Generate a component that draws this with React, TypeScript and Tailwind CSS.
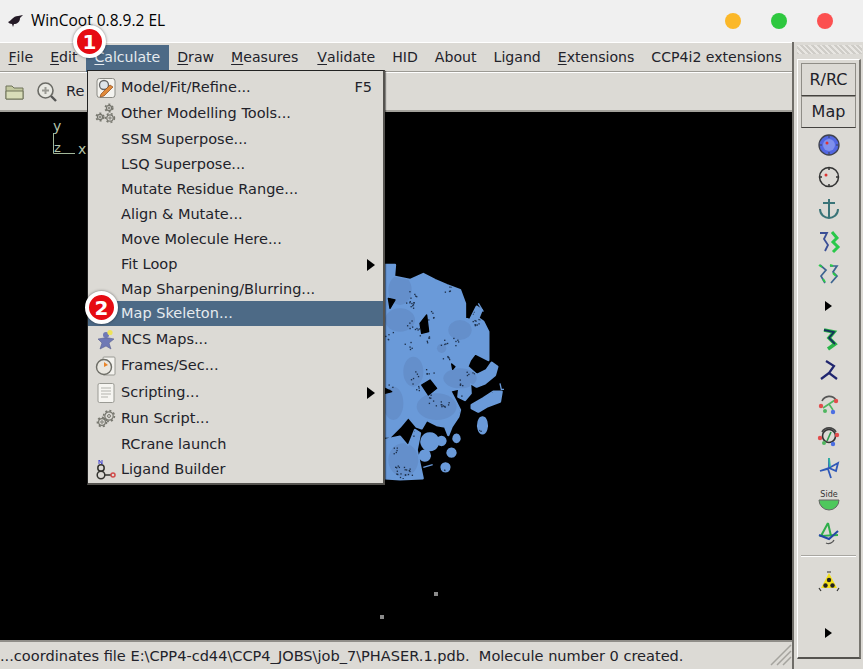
import React from "react";

const menus = [
  ["F", "ile"],
  ["E", "dit"],
  ["C", "alculate"],
  ["D", "raw"],
  ["M", "easures"],
  ["V", "alidate"],
  ["", "HID"],
  ["", "About"],
  ["", "Ligand"],
  ["E", "xtensions"],
  ["", "CCP4i2 extensions"],
];

const Gear = ({ x, y, r }: { x: number; y: number; r: number }) => (
  <g fill="none" stroke="#77776f">
    <circle cx={x} cy={y} r={r} strokeWidth="1.2" />
    <circle cx={x} cy={y} r={r + 1.2} strokeWidth="1.6" strokeDasharray="2 2.2" />
    <circle cx={x} cy={y} r={r * 0.35} strokeWidth="1" />
  </g>
);

const items: { label: string; icon?: React.ReactNode; right?: string; arrow?: boolean; active?: boolean; nudge?: boolean; h: number }[] = [
  {
    label: "Model/Fit/Refine...",
    right: "F5",
    h: 27,
    icon: (
      <svg width="20" height="22" viewBox="0 0 20 22">
        <rect x="1" y="1.5" width="18" height="19" rx="2.5" fill="#f4f3ef" stroke="#8a8a84" />
        <circle cx="8" cy="8" r="4.5" fill="#dfe5ea" stroke="#666" strokeWidth="1.3" />
        <path d="M5 17l9-9 3 2-9 9-4 1z" fill="#e08a3a" stroke="#8d4a1c" strokeWidth=".7" />
      </svg>
    ),
  },
  {
    label: "Other Modelling Tools...",
    h: 26,
    icon: (
      <svg width="24" height="24" viewBox="0 0 24 24">
        <Gear x={15} y={6} r={2.6} />
        <Gear x={6} y={15} r={2.6} />
        <Gear x={16} y={16} r={3.2} />
      </svg>
    ),
  },
  { label: "SSM Superpose...", h: 25 },
  { label: "LSQ Superpose...", h: 25 },
  { label: "Mutate Residue Range...", h: 25 },
  { label: "Align & Mutate...", h: 25 },
  { label: "Move Molecule Here...", h: 25 },
  { label: "Fit Loop", arrow: true, h: 25 },
  { label: "Map Sharpening/Blurring...", nudge: true, h: 24 },
  { label: "Map Skeleton...", active: true, h: 25 },
  {
    label: "NCS Maps...",
    nudge: true,
    h: 26,
    icon: (
      <svg width="20" height="22" viewBox="0 0 20 22">
        <circle cx="10" cy="6" r="3" fill="#6f79b5" />
        <path d="M2 10l6-1h5l5 1-5 4 2 6-5-3-6 3 2-6z" fill="#6f79b5" stroke="#59608f" strokeWidth=".6" />
        <circle cx="14" cy="3.5" r="2.6" fill="#eee35a" />
      </svg>
    ),
  },
  {
    label: "Frames/Sec...",
    h: 27,
    icon: (
      <svg width="22" height="22" viewBox="0 0 22 22">
        <rect x="8" y="2" width="12" height="18" rx="1" fill="#f3f2ee" stroke="#9a9a94" />
        <circle cx="9" cy="12" r="7.5" fill="#e9e7e0" stroke="#6d6d66" strokeWidth="1.4" />
        <path d="M9 12V7l4 3z" fill="#e8852a" />
      </svg>
    ),
  },
  {
    label: "Scripting...",
    arrow: true,
    nudge: true,
    h: 26,
    icon: (
      <svg width="20" height="22" viewBox="0 0 20 22" fill="none">
        <rect x="2" y="1.5" width="16" height="19" rx="1.5" fill="#f6f5f1" stroke="#9a9a94" />
        <path d="M5 6h10M5 9h10M5 12h10M5 15h7" stroke="#b3b3ad" />
      </svg>
    ),
  },
  {
    label: "Run Script...",
    h: 27,
    icon: (
      <svg width="22" height="22" viewBox="0 0 22 22">
        <Gear x={7} y={14} r={3.4} />
        <Gear x={14} y={8} r={4.2} />
      </svg>
    ),
  },
  { label: "RCrane launch", h: 25 },
  {
    label: "Ligand Builder",
    h: 25,
    icon: (
      <svg width="22" height="22" viewBox="0 0 22 22" fill="none" strokeWidth="1.5">
        <circle cx="6" cy="9" r="3.2" stroke="#33332f" />
        <circle cx="6" cy="16" r="3.8" stroke="#33332f" />
        <path d="M10 16h6" stroke="#33332f" />
        <circle cx="18" cy="16" r="2" stroke="#d24a4a" />
        <path d="M4 5V1l3 4V1" stroke="#4040d0" strokeWidth="1" />
      </svg>
    ),
  },
];

const Badge = ({ n, className }: { n: string; className: string }) => (
  <div
    className={`absolute z-30 flex h-[33px] w-[33px] items-center justify-center rounded-full border-[4px] border-white bg-[#e60b12] font-['DejaVu_Sans'] text-[20px] leading-none font-bold text-white shadow-[0_0_3px_rgba(0,0,0,0.5)] ${className}`}
  >
    {n}
  </div>
);

// coordinates below are in 3x pixels, the group scales them down
const blobPath =
  "M15 15 L45 15 L42 50 L90 60 L130 42 L165 60 L200 75 L240 90 L255 130 L255 175 L270 180 L290 140 L305 150 L295 175 L310 185 L325 215 L325 300 L285 280 L270 300 L262 320 L290 345 L320 330 L335 308 L352 320 L345 345 L315 370 L290 380 L270 368 L272 400 L255 420 L235 410 L238 385 L210 392 L225 420 L240 450 L235 470 L215 500 L205 525 L195 500 L170 495 L140 480 L125 505 L110 500 L85 470 L60 500 L30 530 L15 530 Z " +
  "M15 540 L60 530 L85 560 L105 510 L120 520 L110 570 L128 655 L60 658 L15 655 Z " +
  "M275 435 L310 415 L340 395 L365 395 L360 425 L320 440 L295 455 L275 445 Z " +
  "M150 520 A25 25 0 1 1 149 520 Z M185 531 A12 12 0 1 1 184 531 Z M135 572 A15 15 0 1 1 134 572 Z " +
  "M215 566 A12 12 0 1 1 214 566 Z M230 524 A9 11 0 1 1 229 524 Z M197 610 A12 12 0 1 1 196 610 Z " +
  "M308 472 A13 24 0 1 1 307 472 Z";

const rand = (i: number) => {
  const v = Math.sin(i * 12.9898 + 4.1) * 43758.5453;
  return v - Math.floor(v);
};

// little clusters of dark specks, like the holes in the surface
const specks: number[][] = [];
for (let c = 0; c < 46; c++) {
  const cx = 20 + rand(c * 2) * 320;
  const cy = 20 + rand(c * 2 + 1) * 630;
  for (let k = 0; k < 5; k++) {
    specks.push([cx + rand(100 + c * 7 + k) * 26 - 13, cy + rand(500 + c * 5 + k) * 26 - 13]);
  }
}

const Blob = () => (
  <svg className="absolute top-0 left-0" width="792" height="528" viewBox="0 0 792 528">
    <defs>
      <clipPath id="blob">
        <path d={blobPath} />
      </clipPath>
    </defs>
    <g transform="translate(380,148) scale(0.3333)">
      <path d={blobPath} fill="#6a9ad9" stroke="#6a9ad9" strokeWidth="7" strokeLinejoin="round" />
      <g clipPath="url(#blob)" fill="#648fcb">
        <ellipse cx="60" cy="90" rx="35" ry="45" />
        <ellipse cx="60" cy="180" rx="45" ry="35" />
        <ellipse cx="240" cy="210" rx="35" ry="30" />
        <ellipse cx="100" cy="335" rx="30" ry="45" />
        <ellipse cx="240" cy="355" rx="50" ry="30" />
        <ellipse cx="170" cy="440" rx="60" ry="40" />
        <ellipse cx="40" cy="430" rx="30" ry="50" />
        <ellipse cx="70" cy="600" rx="45" ry="50" />
        <circle cx="185" cy="265" r="14" />
        {specks.map(([x, y], i) => (
          <rect key={i} x={x} y={y} width="4" height="4" fill="#1d2f49" />
        ))}
      </g>
      <path
        fill="#000"
        stroke="#000"
        strokeWidth="4"
        strokeLinejoin="round"
        d="M120 190 L140 165 L146 215 L125 220 Z M125 375 L150 360 L170 385 L145 405 Z M25 115 L45 120 L30 145 Z M15 385 L35 395 L15 400 Z M215 312 L225 320 L218 328 Z"
      />
      <path d="M360 370 L364 388 L372 388" stroke="#6a9ad9" strokeWidth="4" fill="none" />
      <path d="M295 130 L310 155" stroke="#6a9ad9" strokeWidth="4" />
      <path d="M130 622 L158 614" stroke="#6a9ad9" strokeWidth="4" />
    </g>
    <rect x="380" y="503" width="4" height="4" fill="#8a8a8a" />
    <rect x="434" y="480" width="4" height="4" fill="#8a8a8a" />
    <path d="M53.5 21v20.5H75" stroke="#a3b89a" fill="none" />
    <text x="53" y="19" fill="#b4c4aa" fontSize="14" fontFamily="DejaVu Sans">y</text>
    <text x="54" y="40" fill="#b4c4aa" fontSize="13" fontFamily="DejaVu Sans">z</text>
    <text x="78" y="42" fill="#b4c4aa" fontSize="14" fontFamily="DejaVu Sans">x</text>
  </svg>
);

const sideIcons: React.ReactNode[] = [
  <svg width="24" height="24" viewBox="0 0 24 24"><circle cx="12" cy="12" r="10" fill="#5267e2" stroke="#3f4250" strokeWidth="1.3" /><circle cx="12" cy="12" r="6" fill="#7f90ec" /><path d="M12 2v3M12 19v3M2 12h3M19 12h3" stroke="#3f4250" /><circle cx="10" cy="10" r="1.5" fill="#d33" /></svg>,
  <svg width="24" height="24" viewBox="0 0 24 24" fill="none" stroke="#333" strokeWidth="1.5"><circle cx="12" cy="12" r="9.5" /><path d="M12 2v3M12 19v3M2 12h3M19 12h3" /><circle cx="9" cy="10" r="1.5" fill="#d33" stroke="none" /></svg>,
  <svg width="24" height="24" viewBox="0 0 24 24" fill="none" stroke="#3a7478" strokeWidth="2"><path d="M12 2v19M6 6h12M3 12c0 6 5 9 9 9s9-3 9-9" /></svg>,
  <svg width="24" height="24" viewBox="0 0 24 24" fill="none" strokeWidth="1.8"><path d="M3 3h7l-3 6 4 6-3 6" stroke="#3b4f96" /><path d="M15 2l5 6-4 4 5 5-5 5" stroke="#2ac84a" strokeWidth="3" /></svg>,
  <svg width="24" height="24" viewBox="0 0 24 24" fill="none" strokeWidth="1.7"><path d="M3 3l6 5-5 6 4 7M13 4h7l-4 6 4 4-6 7" stroke="#3d6490" /><path d="M2 3l3 2M6 17l2 3M16 11l3 3M13 3l3 1" stroke="#2ac84a" strokeWidth="2" /></svg>,
];

const sideIcons2: React.ReactNode[] = [
  <svg width="24" height="24" viewBox="0 0 24 24" fill="none" strokeWidth="3.6"><path d="M7 3l10 2-5 6 6 6-7 5" stroke="#2bb54a" /><path d="M7 3l10 2-5 6 6 6" stroke="#14325a" strokeWidth="1.8" /></svg>,
  <svg width="24" height="24" viewBox="0 0 24 24" fill="none" stroke="#20266f" strokeWidth="2.2"><path d="M9 2l8 5-5 7 8 6M12 14l-8 6" /></svg>,
  <svg width="24" height="24" viewBox="0 0 24 24" fill="none" strokeWidth="1.6"><path d="M5 9a8 8 0 0 1 14-1" stroke="#555" /><path d="M6 16l6-4 6-4M12 12l4 6" stroke="#4fb55f" /><circle cx="19" cy="9" r="2.2" fill="#e24c4c" /><circle cx="4" cy="14" r="2.2" fill="#e24c4c" /><circle cx="16" cy="20" r="2.2" fill="#4c6fe2" /><circle cx="8" cy="19" r="2" fill="#4fb55f" /></svg>,
  <svg width="24" height="24" viewBox="0 0 24 24" fill="none" strokeWidth="1.6"><path d="M5 8a8 8 0 0 1 14 0" stroke="#444" /><circle cx="12" cy="12" r="6.5" stroke="#333" /><path d="M10 17l4-9" stroke="#2c9a4b" /><circle cx="20" cy="11" r="2.2" fill="#e24c4c" /><circle cx="3" cy="14" r="2.2" fill="#e24c4c" /><circle cx="16" cy="20" r="2.2" fill="#4c6fe2" /><circle cx="7" cy="19" r="2" fill="#4fb55f" /></svg>,
  <svg width="24" height="24" viewBox="0 0 24 24" fill="none" strokeWidth="1.8"><path d="M12 2v10l9-5-2 8-7-3-9 3 8-2 3 9" stroke="#2f58b8" /><path d="M12 2l1 9" stroke="#2fb5a0" /></svg>,
  <svg width="24" height="24" viewBox="0 0 24 24"><path d="M2 11h20a10 10 0 0 1-20 0z" fill="#4ec85c" stroke="#666" /><text x="12" y="8" textAnchor="middle" fontSize="8" fill="#333" fontFamily="DejaVu Sans">Side</text></svg>,
  <svg width="24" height="24" viewBox="0 0 24 24" fill="none" strokeWidth="2"><path d="M11 2l-7 13 17-1M11 2l3 13" stroke="#2fae4b" /><path d="M2 14l10 4 9-8" stroke="#2548a8" /><path d="M9 22a6 6 0 0 0 8-3" stroke="#555" strokeWidth="1.3" /></svg>,
];

const SideArrow = () => (
  <div className="h-0 w-0 border-y-[5px] border-l-[7px] border-y-transparent border-l-black" />
);

const MenuArrow = () => (
  <div className="h-0 w-0 border-y-[6px] border-l-[8px] border-y-transparent border-l-black" />
);

export default function App() {
  return (
    <div className="relative flex h-[669px] w-[863px] flex-col overflow-hidden bg-[#dcdad5] font-['DejaVu_Sans',sans-serif] text-[14px] text-[#22222a]">
      {/* title bar */}
      <div className="flex h-[42px] items-center bg-[#f0f0f0] pl-[7px] text-black">
        <svg width="18" height="14" viewBox="0 0 18 14" className="mr-[6px]">
          <path d="M1 8c3-1 5-6 10-6 2 0 3-1 5-1l-3 3c0 4-3 6-6 6l-1 3-1-3C3 10 2 9 1 8z" fill="#241a26" />
        </svg>
        <span className="font-['Open_Sans'] text-[15.5px]">WinCoot 0.8.9.2 EL</span>
        <div className="ml-auto flex gap-[30px] pr-[30px]">
          <span className="h-4 w-4 rounded-full bg-[#fbb829]" />
          <span className="h-4 w-4 rounded-full bg-[#2ec83f]" />
          <span className="h-4 w-4 rounded-full bg-[#fc5050]" />
        </div>
      </div>

      <div className="flex min-h-0 flex-1">
        {/* main column */}
        <div className="flex w-[792px] flex-col">
          <div className="flex h-[30px] items-center border-t border-t-white border-b border-b-[#9c9a94] pt-[2px] text-[14.1px]">
            {menus.map(([u, rest]) => {
              const on = u + rest === "Calculate";
              const wide = u + rest === "Measures";
              return (
                <div
                  key={u + rest}
                  className={`flex h-[27px] items-center px-[8.5px] ${on ? "bg-[#4d6a86] text-[#e6ebef]" : ""} ${wide ? "mr-[2px]" : ""}`}
                >
                  <span className="underline decoration-1 underline-offset-2">{u}</span>
                  {rest}
                </div>
              );
            })}
          </div>
          <div className="flex h-[40px] items-center border-t border-t-white border-b-2 border-b-[#a3a19b] pl-[4px]">
            <svg width="22" height="20" viewBox="0 0 22 20">
              <path d="M2 4h6l2 2h9v11H2z" fill="#c3c8a0" stroke="#6f7259" />
              <path d="M2 9h17v8H2z" fill="#d8dcb8" stroke="#6f7259" />
            </svg>
            <svg width="22" height="22" viewBox="0 0 22 22" fill="none" className="ml-[10px]">
              <circle cx="9.5" cy="9.5" r="7.5" fill="#e8e8e2" stroke="#6b6b66" strokeWidth="1.6" />
              <path d="M6 9.5h7M9.5 6v7" stroke="#9a9a94" strokeWidth="2" />
              <path d="M15 15l5 5" stroke="#555" strokeWidth="2.4" />
            </svg>
            <span className="ml-[8px] text-[14.5px]">Re</span>
          </div>
          <div className="relative flex-1 bg-black">
            <Blob />
          </div>
          <div className="relative flex h-[29px] items-center border-t-2 border-t-[#8f8d88] text-[14.55px] whitespace-pre">
            ...coordinates file E:\CPP4-cd44\CCP4_JOBS\job_7\PHASER.1.pdb.  Molecule number 0 created.
            <svg className="absolute right-0 bottom-[3px]" width="22" height="22" viewBox="0 0 22 22" stroke="#a5a39e" strokeWidth="1.5">
              <path d="M1 21L21 1M7 21L21 7M13 21l8-8" />
            </svg>
          </div>
        </div>

        {/* right dock */}
        <div className="flex w-[71px] flex-col border-l-2 border-l-[#6f6d68] pl-[3px]">
          <div className="mt-[3px] mr-px h-[9px] bg-[repeating-linear-gradient(45deg,#cfcdc8_0,#cfcdc8_2px,#e8e6e2_2px,#e8e6e2_4px)]" />
          <div className="mt-[5px] mr-[2px] mb-[10px] flex flex-1 flex-col items-center border-t border-l border-t-white border-l-white border-r-2 border-b-2 border-r-[#77756f] border-b-[#55534f] px-[2px] pt-[3px]">
            <div className="flex h-[33px] w-[55px] items-center justify-center border border-[#8f8d87] border-b-[#44423f] text-[16px]">R/RC</div>
            <div className="flex h-[32px] w-[55px] items-center justify-center border border-[#8f8d87] border-b-[#44423f] text-[16px]">Map</div>
            <div className="mt-[5px] flex flex-col items-center gap-[9.4px]">
              {sideIcons.map((ic, i) => (
                <div key={i} className="flex h-[23px] items-center">{ic}</div>
              ))}
              <div className="flex h-[23px] items-center"><SideArrow /></div>
              {sideIcons2.map((ic, i) => (
                <div key={i} className="flex h-[23px] items-center">{ic}</div>
              ))}
            </div>
            <div className="mt-[10px] h-[2px] w-[55px] border-t border-[#a8a6a1] bg-white" />
            <div className="mt-[13px]">
              <svg width="24" height="24" viewBox="0 0 24 24">
                <path d="M12 3l8 15H4z" fill="#f4e01a" />
                <circle cx="12" cy="10" r="2.2" fill="#222" />
                <circle cx="8.5" cy="15.5" r="2.2" fill="#222" />
                <circle cx="15.5" cy="15.5" r="2.2" fill="#222" />
                <path d="M10 2h4M2 18l2 3M22 18l-2 3" stroke="#333" strokeWidth="1.2" />
              </svg>
            </div>
            <div className="mt-[34px]"><SideArrow /></div>
          </div>
        </div>
      </div>

      {/* Calculate menu */}
      <div className="absolute top-[70px] left-[87px] z-20 w-[298px] border border-[#222] border-r-2 border-b-2 border-r-[#55534f] border-b-[#55534f] bg-[#dcdad5] pt-[3px] pb-[1px] text-[14.5px] shadow-[1px_1px_1px_rgba(0,0,0,0.4)]">
        {items.map((it) => (
          <div
            key={it.label}
            style={{ height: it.h }}
            className={`flex items-center ${it.active ? "bg-[#4d6a86] text-[#e6ebef]" : ""} ${it.nudge ? "pt-[2px]" : ""}`}
          >
            <div className="flex w-[33px] justify-center pl-[2px]">{it.icon}</div>
            <span>{it.label}</span>
            {it.right && <span className="mr-[11px] ml-auto">{it.right}</span>}
            {it.arrow && <div className="mr-[8px] ml-auto"><MenuArrow /></div>}
          </div>
        ))}
      </div>

      <Badge n="1" className="top-[25px] left-[73px]" />
      <Badge n="2" className="top-[291px] left-[85px]" />
    </div>
  );
}
